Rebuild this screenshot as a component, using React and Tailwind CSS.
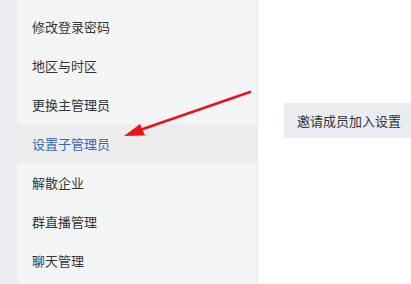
import React from "react";

const items = [
  "修改登录密码",
  "地区与时区",
  "更换主管理员",
  "设置子管理员",
  "解散企业",
  "群直播管理",
  "聊天管理",
];

export default function App() {
  return (
    <div
      className="relative flex h-[284px] w-[411px] overflow-hidden bg-white"
      style={{ fontFamily: '"Noto Sans CJK SC", "Noto Sans", sans-serif' }}
    >
      <div className="w-[18px] shrink-0 bg-[#ebedf0]" />
      <div className="w-[239px] shrink-0 bg-[#f4f5f7] pt-[7px]">
        {items.map((t, i) => (
          <div
            key={t}
            className={
              i === 3
                ? "flex h-[39px] items-center bg-[#ececec] pl-[14px] text-[13px] text-[#3569b0]"
                : "flex h-[39px] items-center pl-[14px] text-[13px] text-[#333333]"
            }
          >
            {t}
          </div>
        ))}
      </div>
      <div className="w-px shrink-0 bg-[#e6e7ea]" />
      <div className="flex-1">
        <div className="ml-[26px] mt-[103px] flex h-[35px] w-[140px] items-center bg-[#e9ecf0] pl-[13px] text-[13px] whitespace-nowrap text-[#333333]">
          邀请成员加入设置
        </div>
      </div>
      <svg
        className="pointer-events-none absolute left-0 top-0"
        width="411"
        height="284"
        viewBox="0 0 411 284"
      >
        <line
          x1="250"
          y1="92"
          x2="140"
          y2="130"
          stroke="#e8141a"
          strokeWidth="2.5"
          strokeLinecap="round"
        />
        <polygon points="124,136 145,135.5 140,124" fill="#e8141a" />
      </svg>
    </div>
  );
}
